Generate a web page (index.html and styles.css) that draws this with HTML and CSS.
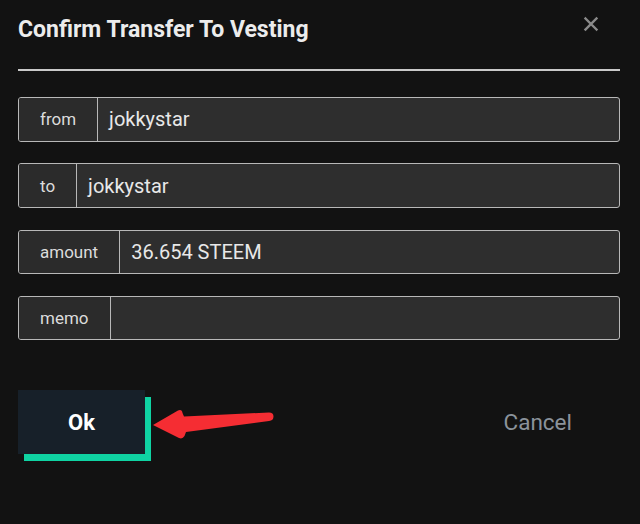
FILE: index.html
```html
<!DOCTYPE html>
<html>
<head>
<meta charset="utf-8">
<link rel="stylesheet" href="styles.css">
</head>
<body>
<div class="dialog">
  <div class="header">
    <h1 class="title">Confirm Transfer To Vesting</h1>
    <svg class="close" width="16" height="16" viewBox="0 0 16 16"><path d="M2.5 2.5 L13.5 13.5 M13.5 2.5 L2.5 13.5" stroke="#8a8a8a" stroke-width="2.4" stroke-linecap="square"/></svg>
  </div>
  <div class="fields">
    <div class="row"><div class="label">from</div><div class="value">jokkystar</div></div>
    <div class="row"><div class="label">to</div><div class="value">jokkystar</div></div>
    <div class="row"><div class="label">amount</div><div class="value">36.654 STEEM</div></div>
    <div class="row"><div class="label">memo</div><div class="value"></div></div>
  </div>
  <div class="actions">
    <div class="ok">Ok</div>
    <div class="cancel">Cancel</div>
    <svg class="arrow" width="130" height="40" viewBox="150 405 130 40"><path d="M153,425 L178,410.5 Q182,409 182.5,413 L184,416.5 L269,412.5 Q273.5,412.5 273.5,416.5 Q273.5,420.5 269,421 L186,432 L184.5,436 Q182.5,439.5 179,438 Z" fill="#f52d33"/></svg>
  </div>
</div>
</body>
</html>
```
FILE: styles.css
```css
html, body {
  margin: 0;
  padding: 0;
  background: #121212;
}
body {
  font-family: Roboto, "Liberation Sans", sans-serif;
  width: 640px;
  height: 524px;
  overflow: hidden;
}
.dialog {
  padding: 0 20px 0 18px;
}
.header {
  display: flex;
  justify-content: space-between;
  align-items: flex-start;
  padding-top: 16px;
  border-bottom: 2px solid #c9c9c9;
  box-sizing: border-box;
  height: 71px;
}
.title {
  margin: 0;
  font-size: 23px;
  line-height: 28px;
  font-weight: 700;
  color: #ececec;
}
.close {
  margin-top: 0;
  margin-right: 21px;
}
.fields {
  margin-top: 26px;
  display: flex;
  flex-direction: column;
  gap: 21.8px;
}
.row {
  display: flex;
  height: 44.5px;
  box-sizing: border-box;
  border: 1px solid #b8b8b8;
  border-radius: 3px;
  background: #2e2e2e;
  overflow: hidden;
}
.label {
  display: flex;
  align-items: center;
  padding: 0 21px;
  border-right: 1px solid #b8b8b8;
  background: #2b2b2b;
  color: #dcdcdc;
  font-size: 17px;
}
.value {
  display: flex;
  align-items: center;
  padding-left: 11px;
  color: #e8e8e8;
  font-size: 20px;
}
.actions {
  position: relative;
  margin-top: 50px;
  display: flex;
  justify-content: space-between;
  align-items: center;
}
.ok {
  width: 127px;
  height: 64px;
  display: flex;
  align-items: center;
  justify-content: center;
  background: #172029;
  box-shadow: 6px 7px 0 #0fd3a3;
  color: #ffffff;
  font-size: 22px;
  font-weight: 700;
}
.cancel {
  margin-right: 48px;
  color: #8b939b;
  font-size: 22.5px;
}
.arrow {
  position: absolute;
  left: 132px;
  top: 15px;
}
```
